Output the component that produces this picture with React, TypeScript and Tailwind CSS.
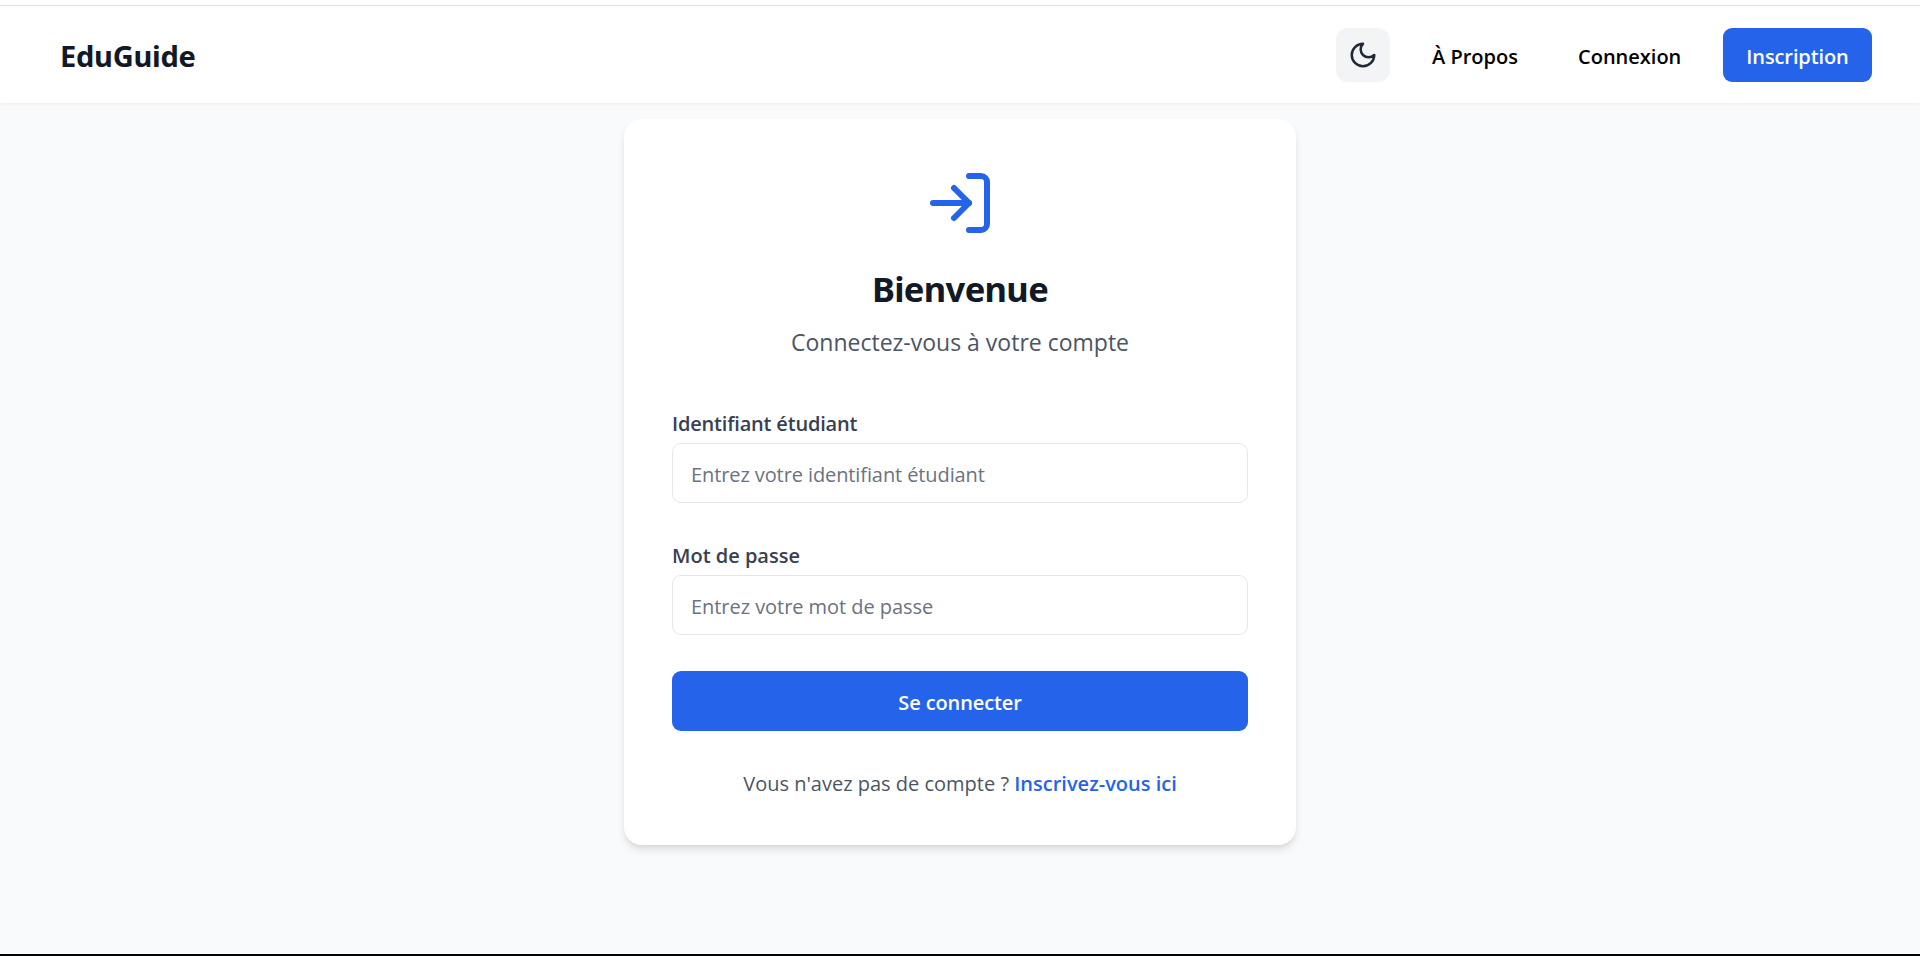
import type { ReactNode } from "react";

function MoonIcon() {
  return (
    <svg viewBox="0 0 24 24" className="size-[30px]" fill="none" stroke="currentColor" strokeWidth="2" strokeLinecap="round" strokeLinejoin="round">
      <path d="M12 3a6 6 0 0 0 9 9 9 9 0 1 1-9-9Z" />
    </svg>
  );
}

function LoginIcon() {
  return (
    <svg viewBox="0 0 24 24" className="mx-auto size-[72px] text-[#2563eb]" fill="none" stroke="currentColor" strokeWidth="2" strokeLinecap="round" strokeLinejoin="round">
      <path d="M15 3h4a2 2 0 0 1 2 2v14a2 2 0 0 1-2 2h-4" />
      <polyline points="10 17 15 12 10 7" />
      <line x1="15" x2="3" y1="12" y2="12" />
    </svg>
  );
}

function Field({ id, label, children }: { id: string; label: ReactNode; children: ReactNode }) {
  return (
    <div>
      <label htmlFor={id} className="block text-[20px] leading-[30px] font-semibold text-[#374151]">
        {label}
      </label>
      {children}
    </div>
  );
}

const inputClass =
  "mt-1 block h-[60px] w-full rounded-[9px] border border-[#e5e7eb] bg-white pr-[17px] pl-[18px] pt-[2px] text-[20px] text-[#111827] outline-none placeholder:text-[#6b7280]";

export default function App() {
  return (
    <div className="flex h-[956px] flex-col overflow-hidden border-b-2 border-black bg-[#f9fafb] font-['Open_Sans','Noto_Sans',sans-serif]">
      <div className="h-[6px] shrink-0 border-b border-[#e0e0e0] bg-white" />
      <header className="relative flex h-[97px] shrink-0 items-start justify-between bg-white pt-[22px] pr-12 pl-[60px] shadow-[0_1.5px_3px_rgba(0,0,0,0.05)]">
        <a href="#" className="h-[54px] pt-px font-['Noto_Sans',sans-serif] text-[29px] leading-[54px] font-bold tracking-[-0.25px] text-[#111827]">
          EduGuide
        </a>
        <nav className="flex text-[20px] leading-[54px] font-semibold text-black">
          <button aria-label="Thème" className="flex size-[54px] items-center justify-center rounded-xl bg-[#f3f4f6] text-[#1f2937]">
            <MoonIcon />
          </button>
          <a href="#" className="ml-[18px] w-32 pt-[2px] pl-6 whitespace-nowrap">À Propos</a>
          <a href="#" className="ml-[18px] w-[151px] pt-[2px] pl-6">Connexion</a>
          <a href="#" className="ml-[18px] h-[54px] w-[149px] rounded-[9px] bg-[#2563eb] pt-[2px] text-center tracking-[-0.1px] text-white">
            Inscription
          </a>
        </nav>
      </header>

      <main className="mx-auto mt-4 h-[726px] w-[672px] shrink-0 rounded-[18px] bg-white p-12 shadow-[0_6px_9px_-1.5px_rgba(0,0,0,0.1),0_3px_6px_-3px_rgba(0,0,0,0.1)]">
        <LoginIcon />
        <h1 className="mt-[26px] text-center font-['Noto_Sans',sans-serif] text-[34.5px] leading-[48px] font-bold tracking-[-0.65px] text-[#111827]">
          Bienvenue
        </h1>
        <p className="mt-[11px] text-center text-[23px] leading-9 text-[#4b5563]">Connectez-vous à votre compte</p>

        <form className="mt-[49px]" onSubmit={(e) => e.preventDefault()}>
          <div className="flex flex-col gap-[38px]">
            <Field id="student" label={<span className="tracking-[-0.18px]">Identifiant étudiant</span>}>
              <input id="student" className={inputClass + " tracking-[-0.1px]"} placeholder="Entrez votre identifiant étudiant" />
            </Field>
            <Field id="password" label="Mot de passe">
              <input id="password" type="password" className={inputClass + " tracking-[-0.05px]"} placeholder="Entrez votre mot de passe" />
            </Field>
          </div>
          <button className="mt-9 block h-[60px] w-full rounded-[9px] bg-[#2563eb] pt-[3px] text-[20px] font-semibold tracking-[-0.12px] text-white">
            Se connecter
          </button>
        </form>

        <p className="mt-[38px] text-center text-[20px] leading-[30px] text-[#4b5563]">
          Vous n'avez pas de compte ?{" "}
          <a href="#" className="font-semibold text-[#2563eb]">Inscrivez-vous ici</a>
        </p>
      </main>
    </div>
  );
}
